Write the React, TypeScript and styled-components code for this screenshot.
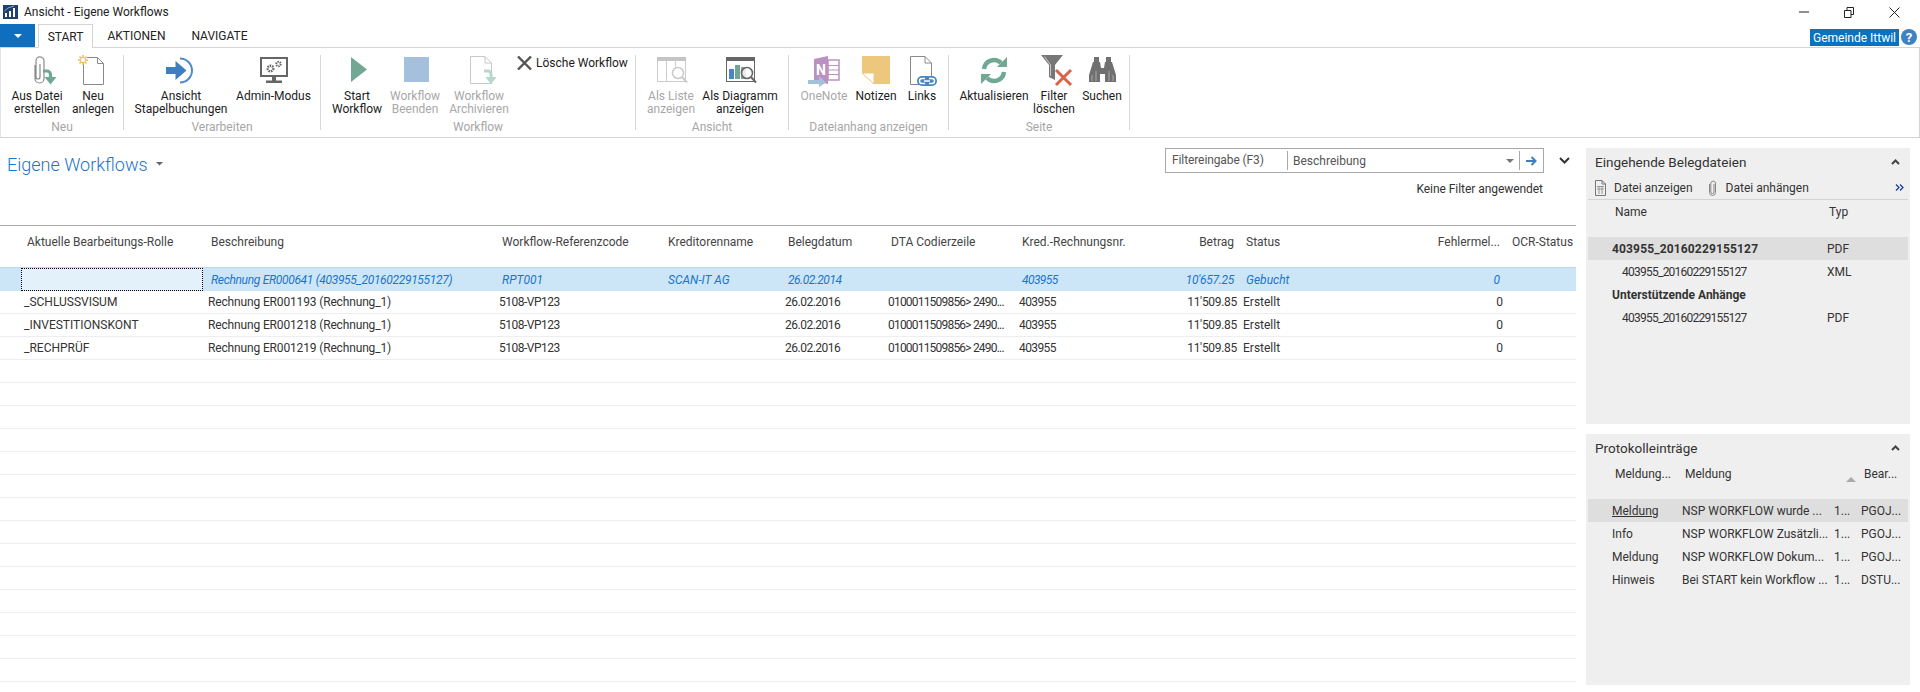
import React from "react";
import styled, { createGlobalStyle } from "styled-components";

const Global = createGlobalStyle`
  html, body { margin: 0; padding: 0; background: #fff; }
  body { font-family: Roboto, "Liberation Sans", sans-serif; font-size: 12px; color: #222; }
  * { box-sizing: border-box; }
`;

const Page = styled.div`
  width: 1920px; height: 692px; overflow: hidden; display: flex; flex-direction: column; background: #fff;
`;
const TitleBar = styled.div`
  height: 24px; display: flex; align-items: center; padding-left: 3px;
`;
const WindowTitle = styled.div`
  margin-left: 6px; font-size: 12px; color: #222; flex: 1;
`;
const WinControls = styled.div`
  display: flex; align-items: center; gap: 35px; padding-right: 20px; color: #222;
`;
const TabStrip = styled.div`
  height: 23px; display: flex; align-items: stretch;
`;
const MenuButton = styled.div`
  width: 35px; background: #106ebe; display: flex; align-items: center; justify-content: center; margin-right: 3px;
`;
const Tab = styled.div<{ $active?: boolean; $w: number }>`
  width: ${p => p.$w}px; display: flex; align-items: center; justify-content: center; font-size: 12px; color: #222; padding-top: 1px;
  ${p => p.$active ? "background:#fff;border:1px solid #d4d4d4;border-bottom:0;margin-bottom:-1px;position:relative;z-index:1;" : ""}
`;
const StripSpacer = styled.div`flex: 1;`;
const Company = styled.div`
  width: 89px; height: 17px; margin-top: 5px; background: #0a72bf; color: #fff; font-size: 12px;
  display: flex; align-items: center; justify-content: center;
`;
const Help = styled.div`
  width: 16px; height: 16px; margin: 5px 3px 0 2px; border-radius: 50%; background: #3f82c4; color: #fff;
  font-size: 13px; font-weight: 700; display: flex; align-items: center; justify-content: center;
`;
const Ribbon = styled.div`
  height: 91px; border-top: 1px solid #d4d4d4; border-bottom: 1px solid #d4d4d4; border-right: 1px solid #d4d4d4;
  border-left: 1px solid #e4e4e4; display: flex; padding-top: 7px;
`;
const Group = styled.div<{ $w: number }>`
  width: ${p => p.$w}px; height: 75px; border-right: 1px solid #d8d8d8; display: flex; flex-direction: column;
`;
const GroupItems = styled.div<{ $pl: number }>`
  flex: 1; display: flex; padding-left: ${p => p.$pl}px; align-items: flex-start; min-height: 0;
`;
const GroupLabel = styled.div`
  height: 16px; line-height: 16px; margin-bottom: -5px; flex: none; text-align: center; color: #a6a6a6; font-size: 12px;
`;
const Item = styled.div<{ $w: number; $off?: boolean }>`
  width: ${p => p.$w}px; flex: none; display: flex; flex-direction: column; align-items: center;
  color: ${p => p.$off ? "#a8a8a8" : "#1c1c1c"}; text-align: center; font-size: 12px; line-height: 13px;
`;
const IconSlot = styled.div<{ $dx?: number; $dy?: number }>`
  height: 35px; width: 100%; display: flex; justify-content: center; align-items: flex-start;
  padding-top: ${p => p.$dy ?? 2}px;
  padding-left: ${p => Math.max(0, (p.$dx || 0) * 2)}px; padding-right: ${p => Math.max(0, -(p.$dx || 0) * 2)}px;
  svg { display: block; flex: none; overflow: visible; }
`;
const SmallItem = styled.div`
  display: flex; align-items: center; gap: 4px; margin-left: 4px; margin-top: 1px; white-space: nowrap; color: #1c1c1c; line-height: 14px;
`;
const Body = styled.div`
  flex: 1; display: flex; min-height: 0;
`;
const Main = styled.div`
  width: 1576px; flex: none; display: flex; flex-direction: column;
`;
const Head = styled.div`
  height: 87px; flex: none; display: flex; justify-content: space-between; padding: 10px 0 0 7px;
`;
const PageTitle = styled.div`
  font-size: 18px; font-weight: 300; color: #1b75c9; display: flex; align-items: center; gap: 8px; height: 32px;
`;
const FilterCol = styled.div`
  display: flex; flex-direction: column; width: 411px;
`;
const FilterRow = styled.div`
  display: flex; align-items: center; justify-content: space-between;
`;
const FilterBox = styled.div`
  width: 379px; height: 25px; border: 1px solid #a8a8a8; display: flex; align-items: center; color: #555; font-size: 12px;
`;
const FilterLabel = styled.div`
  width: 122px; padding-left: 6px; border-right: 1px solid #a8a8a8; height: 19px; line-height: 19px; flex: none; letter-spacing: -.1px;
`;
const FilterValue = styled.div`
  flex: 1; padding-left: 5px;
`;
const FilterBtn = styled.div`
  width: 24px; height: 19px; border-left: 1px solid #a8a8a8; display: flex; align-items: center; justify-content: center; flex: none;
`;
const DropBtn = styled.div`
  width: 18px; display: flex; justify-content: center; flex: none;
`;
const Chevron = styled.div`
  width: 32px; display: flex; justify-content: center; padding-left: 8px;
`;
const NoFilter = styled.div`
  margin-top: 9px; width: 378px; text-align: right; color: #333; font-size: 12px; letter-spacing: -.05px;
`;
const TEMPLATE = "184px 291px 166px 120px 103px 131px 114px 110px 190px 76px 1fr";
const TableHead = styled.div`
  height: 42px; flex: none; border-top: 1px solid #aaa; display: grid; grid-template-columns: ${TEMPLATE}; padding: 9px 0 0 21px; color: #444;
`;
const Row = styled.div<{ $sel?: boolean }>`
  height: ${p => p.$sel ? 24 : 23}px; flex: none; display: grid; grid-template-columns: ${TEMPLATE}; padding-left: 21px; align-items: center;
  background: ${p => p.$sel ? "#cde6f7" : "#fff"};
  border-bottom: 1px solid ${p => p.$sel ? "#cde6f7" : "#eeeeee"};
  border-top: ${p => p.$sel ? "1px solid #bcd9ee" : "0"};
  color: ${p => p.$sel ? "#1b75c9" : "#333"};
  font-style: ${p => p.$sel ? "italic" : "normal"};
`;
const Cell = styled.div<{ $pad?: number; $right?: boolean; $ls?: number }>`
  padding: 0 ${p => p.$pad ?? 3}px; white-space: nowrap; overflow: hidden;
  text-align: ${p => p.$right ? "right" : "left"};
  letter-spacing: ${p => p.$ls ?? 0}px;
`;
const FocusCell = styled.div`
  height: 23px; background: #e3f1fb; border: 1px dotted #000; width: 182px;
`;
const Side = styled.div`
  flex: 1; padding: 10px 10px 7px 10px; display: flex; flex-direction: column; gap: 10px;
`;
const Panel = styled.div<{ $h: number }>`
  height: ${p => p.$h}px; flex: none; background: #efefef; padding: 0 2px;
`;
const PanelHead = styled.div`
  height: 28px; display: flex; align-items: center; justify-content: space-between; padding: 0 8px 0 7px;
  font-size: 13.5px; color: #333;
`;
const PanelTools = styled.div`
  height: 24px; display: flex; align-items: center; border-bottom: 1px solid #d4d4d4; padding: 0 4px 0 7px; color: #333;
`;
const ToolIcon = styled.span<{ $ml?: number; $mr: number }>`
  display: flex; margin-left: ${p => p.$ml ?? 0}px; margin-right: ${p => p.$mr}px;
`;
const ToolGap = styled.div`flex: 1;`;
const FileHead = styled.div`
  height: 37px; display: grid; grid-template-columns: 214px 1fr; padding: 5px 0 0 27px; color: #333;
`;
const FileRow = styled.div<{ $sel?: boolean; $bold?: boolean; $sub?: boolean }>`
  height: 23px; display: grid; grid-template-columns: ${p => p.$sub ? "205px 1fr" : "215px 1fr"}; align-items: center;
  padding-left: ${p => p.$sub ? 34 : 24}px; color: #333;
  background: ${p => p.$sel ? "#dedede" : "transparent"};
  font-weight: ${p => p.$bold ? 700 : 400};
`;
const Num = styled.span<{ $ls: number }>`letter-spacing: ${p => p.$ls}px;`;
const RowType = styled.span`font-weight: 400;`;
const LogHead = styled.div`
  height: 37px; padding: 5px 0 0 27px; display: grid; grid-template-columns: 70px 161px 18px 1fr; color: #333; align-items: start;
`;
const LogRow = styled.div<{ $sel?: boolean }>`
  height: 23px; display: grid; grid-template-columns: 70px 152px 27px 1fr; padding-left: 24px; align-items: center; color: #333;
  background: ${p => p.$sel ? "#dedede" : "transparent"};
`;
const LinkText = styled.span`text-decoration: underline;`;
const Tri = styled.div`
  width: 0; height: 0; border-left: 5px solid transparent; border-right: 5px solid transparent; border-bottom: 5px solid #aaa; margin-top: 10px;
`;

/* ---------- icons ---------- */
const Logo = () => (
  <svg width="15" height="14" viewBox="0 0 15 14"><rect width="15" height="14" fill="#1f3f6f" />
    <path d="M2 12V8h2v4zM6 12V6h2v6zM10 12V3h2v9z" fill="#fff" /><path d="M1.5 6 5 3l3-1 3-1" stroke="#9cc" fill="none" strokeWidth=".8" /></svg>
);
const Min = () => <svg width="10" height="2"><path d="M0 1h10" stroke="#222" /></svg>;
const Restore = () => <svg width="10" height="11"><path d="M.5 3.5h6.5v7H.5zM3 3V.5h6.5v7H7" fill="none" stroke="#222" /></svg>;
const Close = () => <svg width="11" height="11"><path d="M.5.5l10 10M10.5.5l-10 10" stroke="#222" /></svg>;
const GREEN = "#70a893", BLUE = "#3f7fbf";

const ClipIcon = () => (
  <svg width="22" height="30" viewBox="0 0 22 30">
    <path d="M3 9v13.5a4.5 4.5 0 0 0 9 0V5a4 4 0 0 0-8-.2V21a2 2 0 0 0 4 0V8" transform="translate(-1 0)" fill="none" stroke="#8a8a8a" strokeWidth="1.2" />
    <path d="M10 15h4a3.5 3.5 0 0 1 3.5 3.5V23" fill="none" stroke={GREEN} strokeWidth="3.2" />
    <path d="M11.5 21h12l-6 7.5z" fill={GREEN} />
  </svg>
);
const NewIcon = () => (
  <svg width="26" height="30" viewBox="0 0 26 30">
    <path d="M5.5 5.5V29.500h20V8.500L19.500 2.500H9" fill="none" stroke="#8a8a8a" />
    <path d="M19.500 2.500v6h6" fill="none" stroke="#8a8a8a" />
    <path d="M5 0v10M0 5h10M1.500 1.500l7 7M8.500 1.500l-7 7" stroke="#f0bf63" strokeWidth="1.6" />
    <circle cx="5" cy="5" r="2.6" fill="#fff" stroke="#f0bf63" />
  </svg>
);
const EnterIcon = () => (
  <svg width="31" height="27" viewBox="0 0 31 27">
    <path d="M14 1.500a12 12 0 1 1 0 24" fill="none" stroke="#4f8ac6" strokeWidth="2" />
    <path d="M0 10h9.500V4l11 9.500-11 9.500v-6H0z" fill={BLUE} />
  </svg>
);
const AdminIcon = () => (
  <svg width="28" height="27" viewBox="0 0 28 27">
    <rect x="1" y="1" width="26" height="18" fill="#fff" stroke="#666" strokeWidth="2" />
    <path d="M12 20h4v3.500h6V26H6v-2.500h6z" fill="#666" />
    <circle cx="10.500" cy="11.500" r="2.800" fill="none" stroke="#666" strokeWidth="2.400" strokeDasharray="1.500 .9" />
    <circle cx="18.500" cy="7" r="2.200" fill="none" stroke="#666" strokeWidth="2" strokeDasharray="1.300 .8" />
  </svg>
);
const PlayIcon = () => <svg width="16" height="25" viewBox="0 0 16 25"><path d="M0 0l16 12.500L0 25z" fill={GREEN} /></svg>;
const StopIcon = () => <svg width="25" height="25"><rect width="25" height="25" fill="#a5c0dc" /></svg>;
const ArchiveIcon = () => (
  <svg width="27" height="30" viewBox="0 0 27 30">
    <path d="M.5 .5V27.500h21V7L15 .5z" fill="#fff" stroke="#c8c8c8" /><path d="M15 .5V7h6.500" fill="none" stroke="#c8c8c8" />
    <path d="M14 15h4a3 3 0 0 1 3 3v4" fill="none" stroke="#b9d8cc" strokeWidth="3" />
    <path d="M15.500 21h11l-5.500 7.500z" fill="#b9d8cc" />
  </svg>
);
const XIcon = () => <svg width="15" height="14" viewBox="0 0 15 14"><path d="M1 .5l13 13M14 .5l-13 13" stroke="#555" strokeWidth="2.400" /></svg>;
const ListIcon = () => (
  <svg width="31" height="27" viewBox="0 0 31 27">
    <rect x=".5" y=".5" width="28" height="24" fill="#fff" stroke="#ccc" /><rect width="29" height="4" fill="#c4c4c4" />
    <path d="M9.500 4v20M18.500 4v12" stroke="#ccc" />
    <circle cx="21" cy="16" r="5.500" fill="#fff" stroke="#ccc" strokeWidth="1.600" /><path d="M25 20l5 5.500" stroke="#ccc" strokeWidth="2" />
  </svg>
);
const DiagramIcon = () => (
  <svg width="31" height="27" viewBox="0 0 31 27">
    <rect x=".5" y=".5" width="28" height="24" fill="#fff" stroke="#666" /><rect width="29" height="4" fill="#666" />
    <rect x="3" y="12" width="5" height="10" fill="#4a86c5" /><rect x="9" y="8" width="5" height="14" fill={GREEN} /><rect x="15" y="10" width="5" height="12" fill="#999" />
    <circle cx="21" cy="16" r="5.500" fill="#fff" fillOpacity=".8" stroke="#666" strokeWidth="1.600" /><path d="M25 20l5 5.500" stroke="#666" strokeWidth="2" />
  </svg>
);
const NoteIcon = () => (
  <svg width="32" height="31" viewBox="0 0 32 31">
    <path d="M6 3l14-3v28l-14-3z" fill="#b992c2" />
    <rect x="20" y="4" width="11" height="20" fill="none" stroke="#b992c2" strokeWidth="1.500" />
    <path d="M20 9.500h11M20 14h11M20 18.500h11" stroke="#b992c2" />
    <text x="8" y="19" fontFamily="Roboto, sans-serif" fontWeight="700" fontSize="14" fill="#fff">N</text>
    <path d="M0 24h11v-4l7 6.500-7 4.500v-3H0z" fill="#a5c0dc" />
  </svg>
);
const StickyIcon = () => (
  <svg width="28" height="28" viewBox="0 0 28 28"><path d="M0 0h28v28H12L0 17z" fill="#ecc77c" /><path d="M0 17h12v11z" fill="#fff" stroke="#ecc77c" /></svg>
);
const LinksIcon = () => (
  <svg width="27" height="30" viewBox="0 0 27 30">
    <path d="M.5 .5V28.500h21V7L15 .5z" fill="#fff" stroke="#8a8a8a" /><path d="M15 .5V7h6.500" fill="none" stroke="#8a8a8a" />
    <rect x="7" y="20" width="20" height="10" rx="5" fill="#4a86c5" />
    <path d="M15 22.500h-3a2.500 2.500 0 0 0 0 5h3M19 22.500h3a2.500 2.500 0 0 1 0 5h-3M14 25h6" fill="none" stroke="#fff" strokeWidth="1.400" />
  </svg>
);
const RefreshIcon = () => (
  <svg width="26" height="27" viewBox="0 0 26 27">
    <path d="M3 12A10 10 0 0 1 20 6" fill="none" stroke={GREEN} strokeWidth="4.500" />
    <path d="M23 15A10 10 0 0 1 6 21" fill="none" stroke={GREEN} strokeWidth="4.500" />
    <path d="M16 10h10V0z" fill={GREEN} /><path d="M10 17H0v10z" fill={GREEN} />
  </svg>
);
const FilterIcon = () => (
  <svg width="31" height="31" viewBox="0 0 31 31">
    <path d="M0 0h22l-8 10v15l-6-3V10z" fill="#777" /><path d="M3.500 1.500L9.500 10v11" stroke="#fff" fill="none" opacity=".6" />
    <path d="M15 15l15 15M30 15l-15 15" stroke="#d9634a" strokeWidth="3" />
  </svg>
);
const BinocIcon = () => (
  <svg width="27" height="25" viewBox="0 0 27 25">
    <path d="M5 0h5v5H5zM17 0h5v5h-5zM4 5h7l1 6h3l1-6h7l4 13v7H16v-8h-5v8H0v-7z" fill="#707070" />
    <path d="M3 18v6M7 14v10M20 14v10M24 18v6" stroke="#fff" strokeWidth=".6" opacity=".7" />
  </svg>
);
const DocSmall = () => (
  <svg width="11" height="16" viewBox="0 0 11 16">
    <path d="M.5 .5v15h10V4L7 .5zM7 .5V4h3.500" fill="none" stroke="#777" /><path d="M2 6.500h7M2 9h7M4 7v7M7 7v7" stroke="#999" fill="none" />
  </svg>
);
const ClipSmall = () => (
  <svg width="7" height="16" viewBox="0 0 7 16"><path d="M5 4v8a1.600 1.600 0 0 1-3.200 0V3a2.400 2.400 0 0 1 4.700 0v9.500a3 3 0 0 1-6 0V4" fill="none" stroke="#888" /></svg>
);
const Up = () => <svg width="9" height="6" viewBox="0 0 9 6"><path d="M1 5l3.500-3.500L8 5" fill="none" stroke="#444" strokeWidth="2" /></svg>;
const Down = () => <svg width="11" height="7" viewBox="0 0 11 7"><path d="M1 1l4.500 4.500L10 1" fill="none" stroke="#333" strokeWidth="2" /></svg>;
const Caret = ({ c = "#666", w = 8 }: { c?: string; w?: number }) => (
  <svg width={w} height={w / 2} viewBox="0 0 8 4"><path d="M0 0h8L4 4z" fill={c} /></svg>
);
const GoArrow = () => <svg width="11" height="10" viewBox="0 0 11 10"><path d="M0 5h9M5.500 1l4 4-4 4" fill="none" stroke="#3f7fbf" strokeWidth="2" /></svg>;
const More = () => <svg width="9" height="7" viewBox="0 0 9 7"><path d="M1 .5l3 3-3 3M5 .5l3 3-3 3" fill="none" stroke="#1f3f8f" strokeWidth="1.300" /></svg>;

type It = { w: number; dx?: number; dy?: number; off?: boolean; icon: React.ReactNode; label: [string, string?] };
const ribbon: { w: number; pl: number; label: string; items: It[]; extra?: React.ReactNode }[] = [
  { w: 123, pl: 8, label: "Neu", items: [
    { w: 56, dx: 7, dy: 1, icon: <ClipIcon />, label: ["Aus Datei", "erstellen"] },
    { w: 56, dx: -2, dy: 0, icon: <NewIcon />, label: ["Neu", "anlegen"] } ] },
  { w: 197, pl: 11, label: "Verarbeiten", items: [
    { w: 92, icon: <EnterIcon />, label: ["Ansicht", "Stapelbuchungen"] },
    { w: 93, icon: <AdminIcon />, label: ["Admin-Modus"] } ] },
  { w: 315, pl: 8, label: "Workflow", items: [
    { w: 56, dx: 2, icon: <PlayIcon />, label: ["Start", "Workflow"] },
    { w: 60, dx: 1.5, off: true, icon: <StopIcon />, label: ["Workflow", "Beenden"] },
    { w: 68, dx: 4.5, off: true, dy: 1, icon: <ArchiveIcon />, label: ["Workflow", "Archivieren"] } ],
    extra: <SmallItem><XIcon />Lösche Workflow</SmallItem> },
  { w: 153, pl: 7, label: "Ansicht", items: [
    { w: 56, dx: 1.5, off: true, icon: <ListIcon />, label: ["Als Liste", "anzeigen"] },
    { w: 82, dx: 1.5, icon: <DiagramIcon />, label: ["Als Diagramm", "anzeigen"] } ] },
  { w: 160, pl: 7, label: "Dateianhang anzeigen", items: [
    { w: 56, off: true, dy: 1, icon: <NoteIcon />, label: ["OneNote"] },
    { w: 48, dy: 1, icon: <StickyIcon />, label: ["Notizen"] },
    { w: 44, dx: 1.5, dy: 1, icon: <LinksIcon />, label: ["Links"] } ] },
  { w: 181, pl: 7, label: "Seite", items: [
    { w: 76, icon: <RefreshIcon />, label: ["Aktualisieren"] },
    { w: 44, dx: 2.5, dy: 0, icon: <FilterIcon />, label: ["Filter", "löschen"] },
    { w: 52, icon: <BinocIcon />, label: ["Suchen"] } ] },
];

const headers = ["Aktuelle Bearbeitungs-Rolle", "Beschreibung", "Workflow-Referenzcode", "Kreditorenname", "Belegdatum", "DTA Codierzeile", "Kred.-Rechnungsnr.", "Betrag", "Status", "Fehlermel...", "OCR-Status"];
const rows = [
  ["_SCHLUSSVISUM", "Rechnung ER001193 (Rechnung_1)"],
  ["_INVESTITIONSKONT", "Rechnung ER001218 (Rechnung_1)"],
  ["_RECHPRÜF", "Rechnung ER001219 (Rechnung_1)"],
];
const logs = [
  ["Meldung", "NSP WORKFLOW wurde ...", "1...", "PGOJ..."],
  ["Info", "NSP WORKFLOW Zusätzli...", "1...", "PGOJ..."],
  ["Meldung", "NSP WORKFLOW Dokum...", "1...", "PGOJ..."],
  ["Hinweis", "Bei START kein Workflow ...", "1...", "DSTU..."],
];

export default function App() {
  return (
    <Page>
      <Global />
      <TitleBar>
        <Logo />
        <WindowTitle>Ansicht - Eigene Workflows</WindowTitle>
        <WinControls><Min /><Restore /><Close /></WinControls>
      </TitleBar>
      <TabStrip>
        <MenuButton><Caret c="#fff" w={8} /></MenuButton>
        <Tab $active $w={55}>START</Tab>
        <Tab $w={87}>AKTIONEN</Tab>
        <Tab $w={79}>NAVIGATE</Tab>
        <StripSpacer />
        <Company>Gemeinde Ittwil</Company>
        <Help>?</Help>
      </TabStrip>
      <Ribbon>
        {ribbon.map(g => (
          <Group key={g.label} $w={g.w}>
            <GroupItems $pl={g.pl}>
              {g.items.map(it => (
                <Item key={it.label.join()} $w={it.w} $off={it.off}>
                  <IconSlot $dx={it.dx} $dy={it.dy}>{it.icon}</IconSlot>
                  <span>{it.label[0]}{it.label[1] && <br />}{it.label[1]}</span>
                </Item>
              ))}
              {g.extra}
            </GroupItems>
            <GroupLabel>{g.label}</GroupLabel>
          </Group>
        ))}
      </Ribbon>
      <Body>
        <Main>
          <Head>
            <PageTitle>Eigene Workflows <Caret c="#666" w={7} /></PageTitle>
            <FilterCol>
              <FilterRow>
                <FilterBox>
                  <FilterLabel>Filtereingabe (F3)</FilterLabel>
                  <FilterValue>Beschreibung</FilterValue>
                  <DropBtn><Caret c="#777" w={8} /></DropBtn>
                  <FilterBtn><GoArrow /></FilterBtn>
                </FilterBox>
                <Chevron><Down /></Chevron>
              </FilterRow>
              <NoFilter>Keine Filter angewendet</NoFilter>
            </FilterCol>
          </Head>
          <TableHead>
            {headers.map((h, i) => <Cell key={h} $pad={6} $right={i === 7 || i === 9}>{h}</Cell>)}
          </TableHead>
          <Row $sel>
            <FocusCell />
            <Cell $pad={6} $ls={-0.33}>Rechnung ER000641 (403955_20160229155127)</Cell>
            <Cell $pad={6}>RPT001</Cell>
            <Cell $pad={6}>SCAN-IT AG</Cell>
            <Cell $pad={6} $ls={-0.5}>26.02.2014</Cell>
            <Cell $pad={6} />
            <Cell $pad={6} $ls={-0.6}>403955</Cell>
            <Cell $pad={6} $right $ls={-0.3}>10'657.25</Cell>
            <Cell $pad={6}>Gebucht</Cell>
            <Cell $pad={6} $right>0</Cell>
            <Cell />
          </Row>
          {rows.map(r => (
            <Row key={r[0]}>
              <Cell>{r[0]}</Cell>
              <Cell $ls={-0.15}>{r[1]}</Cell>
              <Cell $ls={-0.5}>5108-VP123</Cell>
              <Cell />
              <Cell $ls={-0.5}>26.02.2016</Cell>
              <Cell $ls={-0.8}>0100011509856&gt; 2490...</Cell>
              <Cell $ls={-0.6}>403955</Cell>
              <Cell $right $ls={-0.3}>11'509.85</Cell>
              <Cell>Erstellt</Cell>
              <Cell $right>0</Cell>
              <Cell />
            </Row>
          ))}
          {Array.from({ length: 14 }, (_, i) => <Row key={i} />)}
        </Main>
        <Side>
          <Panel $h={276}>
            <PanelHead>Eingehende Belegdateien <Up /></PanelHead>
            <PanelTools>
              <ToolIcon $mr={8}><DocSmall /></ToolIcon>
              <span>Datei anzeigen</span>
              <ToolIcon $ml={16} $mr={10}><ClipSmall /></ToolIcon>
              <span>Datei anhängen</span>
              <ToolGap />
              <More />
            </PanelTools>
            <FileHead><span>Name</span><span>Typ</span></FileHead>
            <FileRow $sel $bold><Num $ls={0.15}>403955_20160229155127</Num><RowType>PDF</RowType></FileRow>
            <FileRow $sub><Num $ls={-0.75}>403955_20160229155127</Num><span>XML</span></FileRow>
            <FileRow $bold><span>Unterstützende Anhänge</span></FileRow>
            <FileRow $sub><Num $ls={-0.75}>403955_20160229155127</Num><span>PDF</span></FileRow>
          </Panel>
          <Panel $h={251}>
            <PanelHead>Protokolleinträge <Up /></PanelHead>
            <LogHead><span>Meldung...</span><span>Meldung</span><Tri /><span>Bear...</span></LogHead>
            {logs.map((l, i) => (
              <LogRow key={i} $sel={i === 0}>
                <span>{i === 0 ? <LinkText>{l[0]}</LinkText> : l[0]}</span><span>{l[1]}</span><span>{l[2]}</span><span>{l[3]}</span>
              </LogRow>
            ))}
          </Panel>
        </Side>
      </Body>
    </Page>
  );
}
